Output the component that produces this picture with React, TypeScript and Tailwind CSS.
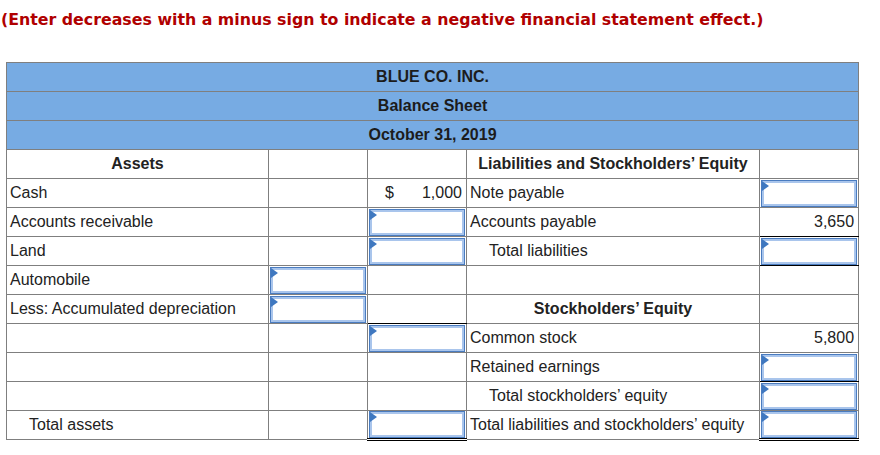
import React from 'react'

type Cell =
  | { kind: 'empty' }
  | { kind: 'text'; text: string; bold?: boolean; center?: boolean; indent?: boolean }
  | { kind: 'num'; text: string; dollar?: boolean }
  | { kind: 'input' }

const E: Cell = { kind: 'empty' }
const I: Cell = { kind: 'input' }
const t = (text: string, extra: Partial<{ bold: boolean; center: boolean; indent: boolean }> = {}): Cell => ({ kind: 'text', text, ...extra })

// which cells carry a black rule underneath: 's' single, 'd' double
type Rule = '' | 's' | 'd'

interface Row {
  cells: Cell[]
  rules?: Rule[]
}

const rows: Row[] = [
  { cells: [t('Assets', { bold: true, center: true }), E, E, t('Liabilities and Stockholders’ Equity', { bold: true, center: true }), E] },
  { cells: [t('Cash'), E, { kind: 'num', text: '1,000', dollar: true }, t('Note payable'), I] },
  { cells: [t('Accounts receivable'), E, I, t('Accounts payable'), { kind: 'num', text: '3,650' }], rules: ['', '', '', '', 's'] },
  { cells: [t('Land'), E, I, t('Total liabilities', { indent: true }), I], rules: ['', '', '', '', 's'] },
  { cells: [t('Automobile'), I, E, E, E] },
  { cells: [t('Less: Accumulated depreciation'), I, E, t('Stockholders’ Equity', { bold: true, center: true }), E], rules: ['', '', 's', '', ''] },
  { cells: [E, E, I, t('Common stock'), { kind: 'num', text: '5,800' }] },
  { cells: [E, E, E, t('Retained earnings'), I], rules: ['', '', '', '', 's'] },
  { cells: [E, E, E, t('Total stockholders’ equity', { indent: true }), I], rules: ['', '', '', '', 's'] },
  { cells: [t('Total assets', { indent: true }), E, I, t('Total liabilities and stockholders’ equity'), I], rules: ['', '', 'd', '', 'd'] },
]

function InputBox() {
  return (
    <div className="relative h-[27px] mx-[1px] border border-[#4a7cc0]">
      <div className="h-full border-2 border-[#a9c5ec] bg-white" />
      <div className="absolute left-0 top-0 w-0 h-0 border-y-[5px] border-y-transparent border-l-[7px] border-l-[#3f78c0]" />
    </div>
  )
}

function renderCell(c: Cell) {
  if (c.kind === 'input') return <InputBox />
  if (c.kind === 'num')
    return (
      <div className="flex justify-between pl-[17px] pr-[4px]">
        <span>{c.dollar ? '$' : ''}</span>
        <span>{c.text}</span>
      </div>
    )
  if (c.kind === 'text')
    return (
      <div className={`${c.center ? 'text-center' : c.indent ? 'pl-[22px]' : 'pl-[3px]'} ${c.bold ? 'font-bold' : ''} whitespace-nowrap`}>
        {c.text}
      </div>
    )
  return null
}

const ruleClass: Record<Rule, string> = {
  '': '',
  s: 'border-b-black',
  d: 'border-b-[3px] border-b-black border-double',
}

export default function App() {
  return (
    <div className="w-[880px] h-[455px] bg-white font-['Liberation_Sans',Arial,sans-serif] text-[#222]">
      <p className="pl-[1px] pt-[9px] text-[15.8px] leading-[22px] font-bold text-[#b00000] font-['DejaVu_Sans',sans-serif] whitespace-nowrap">
        (Enter decreases with a minus sign to indicate a negative financial statement effect.)
      </p>
      <table className="ml-[6px] mt-[31px] w-[852px] border-collapse table-fixed text-[16px]">
        <colgroup>
          <col className="w-[262px]" />
          <col className="w-[99px]" />
          <col className="w-[99px]" />
          <col className="w-[293px]" />
          <col className="w-[99px]" />
        </colgroup>
        <tbody>
          {['BLUE CO. INC.', 'Balance Sheet', 'October 31, 2019'].map((h) => (
            <tr key={h}>
              <td colSpan={5} className="h-[29px] p-0 border border-[#7f7f7f] bg-[#77abe3] text-center font-bold text-[#1c1c1c]">
                {h}
              </td>
            </tr>
          ))}
          {rows.map((r, i) => (
            <tr key={i}>
              {r.cells.map((c, j) => (
                <td
                  key={j}
                  className={`h-[29px] p-0 border border-[#7f7f7f] align-middle ${ruleClass[r.rules?.[j] ?? '']}`}
                >
                  {renderCell(c)}
                </td>
              ))}
            </tr>
          ))}
        </tbody>
      </table>
    </div>
  )
}
